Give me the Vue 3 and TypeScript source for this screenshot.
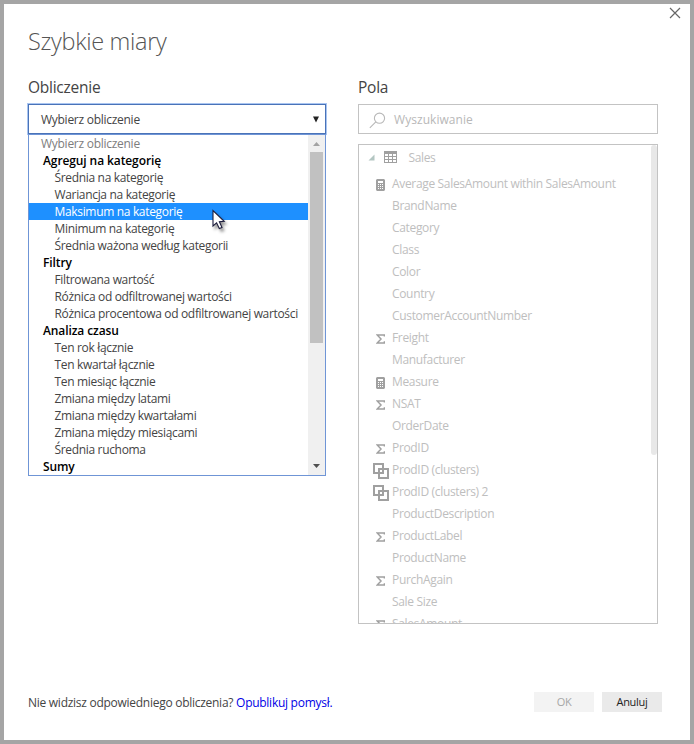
<script setup lang="ts">
import { ref } from 'vue'

type OptionKind = 'placeholder' | 'group' | 'item'
interface CalcOption { label: string; kind: OptionKind }
interface Field { name: string; icon?: 'sum' | 'calc' | 'cluster' }

const item = (label: string): CalcOption => ({ label, kind: 'item' })
const group = (label: string): CalcOption => ({ label, kind: 'group' })

const options: CalcOption[] = [
  { label: 'Wybierz obliczenie', kind: 'placeholder' },
  group('Agreguj na kategorię'),
  item('Średnia na kategorię'),
  item('Wariancja na kategorię'),
  item('Maksimum na kategorię'),
  item('Minimum na kategorię'),
  item('Średnia ważona według kategorii'),
  group('Filtry'),
  item('Filtrowana wartość'),
  item('Różnica od odfiltrowanej wartości'),
  item('Różnica procentowa od odfiltrowanej wartości'),
  group('Analiza czasu'),
  item('Ten rok łącznie'),
  item('Ten kwartał łącznie'),
  item('Ten miesiąc łącznie'),
  item('Zmiana między latami'),
  item('Zmiana między kwartałami'),
  item('Zmiana między miesiącami'),
  item('Średnia ruchoma'),
  group('Sumy'),
]
const active = ref('Maksimum na kategorię')

const fields: Field[] = [
  { name: 'Average SalesAmount within SalesAmount', icon: 'calc' },
  { name: 'BrandName' },
  { name: 'Category' },
  { name: 'Class' },
  { name: 'Color' },
  { name: 'Country' },
  { name: 'CustomerAccountNumber' },
  { name: 'Freight', icon: 'sum' },
  { name: 'Manufacturer' },
  { name: 'Measure', icon: 'calc' },
  { name: 'NSAT', icon: 'sum' },
  { name: 'OrderDate' },
  { name: 'ProdID', icon: 'sum' },
  { name: 'ProdID (clusters)', icon: 'cluster' },
  { name: 'ProdID (clusters) 2', icon: 'cluster' },
  { name: 'ProductDescription' },
  { name: 'ProductLabel', icon: 'sum' },
  { name: 'ProductName' },
  { name: 'PurchAgain', icon: 'sum' },
  { name: 'Sale Size' },
  { name: 'SalesAmount', icon: 'sum' },
]
</script>

<template>
  <div class="dialog">
    <button class="close" aria-label="Zamknij">
      <svg width="12" height="12" viewBox="0 0 12 12"><path d="M1 1L11 11M11 1L1 11" stroke="#666" stroke-width="1.2" fill="none" /></svg>
    </button>
    <h1>Szybkie miary</h1>
    <div class="columns">
      <section class="calc">
        <h2 class="calc-title">Obliczenie</h2>
        <div class="select">
          <span>Wybierz obliczenie</span>
          <svg width="6" height="7" viewBox="0 0 6 7"><path d="M0 0.5H6L3 6.5Z" fill="#222" /></svg>
        </div>
        <div class="dropdown">
          <ul>
            <li v-for="o in options" :key="o.kind + o.label" :class="[o.kind, { active: o.label === active }]">{{ o.label }}</li>
          </ul>
          <div class="scroll">
            <svg width="17" height="17" viewBox="0 0 17 17"><path d="M5 11L8.5 7L12 11Z" fill="#a3a3a3" /></svg>
            <div class="thumb"></div>
            <svg width="17" height="17" viewBox="0 0 17 17"><path d="M5 6H12L8.5 10Z" fill="#505050" /></svg>
          </div>
        </div>
      </section>
      <section class="fields">
        <h2 class="fields-title">Pola</h2>
        <div class="search">
          <svg width="17" height="17" viewBox="0 0 17 17" fill="none" stroke="#b8b8b8" stroke-width="1.1"><circle cx="10.5" cy="6.2" r="5.1" /><path d="M6.8 9.8L0.8 15.8" /></svg>
          <span>Wyszukiwanie</span>
        </div>
        <div class="tree">
          <div class="table-row">
            <svg class="expander" width="7" height="7" viewBox="0 0 7 7"><path d="M6.5 0.5V6.5H0.5Z" fill="#b3c6c2" /></svg>
            <svg class="grid" width="13" height="12" viewBox="0 0 13 12" shape-rendering="crispEdges"><path fill="#a0a0a0" fill-rule="evenodd" d="M0 0H13V12H0ZM1 3V5H4V3ZM5 3V5H8V3ZM9 3V5H12V3ZM1 6V8H4V6ZM5 6V8H8V6ZM9 6V8H12V6ZM1 9V11H4V9ZM5 9V11H8V9ZM9 9V11H12V9Z" /></svg>
            <span>Sales</span>
          </div>
          <div v-for="f in fields" :key="f.name" class="field">
            <span class="icon">
              <svg v-if="f.icon === 'sum'" class="sum" width="9" height="10" viewBox="0 0 9 10"><path d="M8.4 2.5V0.9H1.2L5 5L1.2 9H8.4V7.3" fill="none" stroke="#a0a0a0" stroke-width="1.5" /></svg>
              <svg v-else-if="f.icon === 'calc'" class="calculator" width="9" height="12" viewBox="0 0 9 12"><path fill="#a0a0a0" fill-rule="evenodd" d="M1 0H8L9 1V11L8 12H1L0 11V1ZM2 2V4H7V2ZM2 5V6H3V5ZM4 5V6H5V5ZM6 5V6H7V5ZM2 7V8H3V7ZM4 7V8H5V7ZM6 7V8H7V7ZM2 9V10H3V9ZM4 9V10H5V9ZM6 9V10H7V9Z" /></svg>
              <svg v-else-if="f.icon === 'cluster'" class="cluster" width="16" height="16" viewBox="0 0 16 16" fill="none" stroke="#a0a0a0" stroke-width="2"><rect x="1" y="1" width="9" height="9" /><rect x="6" y="6" width="9" height="9" /></svg>
            </span>
            <span class="name">{{ f.name }}</span>
          </div>
          <div class="tree-thumb"></div>
        </div>
      </section>
    </div>
    <footer>
      <p><span class="ask">Nie widzisz odpowiedniego obliczenia?</span> <a>Opublikuj pomysł.</a></p>
      <button class="btn ok" disabled>OK</button>
      <button class="btn cancel">Anuluj</button>
    </footer>
    <svg class="cursor" width="22" height="28" viewBox="0 0 22 28"><path d="M2 1.5V17L5.6 13.8L8.3 19.6L11 18.4L8.4 12.7L13.2 12.3Z" fill="#fff" stroke="#1c1c3c" stroke-width="1.1" /></svg>
  </div>
</template>

<style>
body { margin: 0; }
</style>

<style scoped>
* { box-sizing: border-box; }
.dialog {
  position: relative;
  width: 694px;
  height: 744px;
  border: 4px solid #a5a5a5;
  background: #fff;
  padding: 21px 28px 28px 24px;
  display: flex;
  flex-direction: column;
  font-family: "Open Sans", "Noto Sans", sans-serif;
  font-size: 12px;
  color: #444;
  white-space: nowrap;
}
.close {
  position: absolute;
  top: 3px;
  right: 9px;
  width: 12px;
  height: 12px;
  padding: 0;
  border: 0;
  background: none;
  line-height: 0;
}
h1 {
  margin: 0;
  height: 32px;
  line-height: 32px;
  font-size: 23.5px;
  font-weight: 300;
  letter-spacing: -0.32px;
  color: #555;
}
h2 {
  margin: 0;
  height: 22px;
  line-height: 22px;
  font-size: 15.5px;
  font-weight: 400;
  letter-spacing: -0.25px;
}
.columns { display: flex; gap: 32px; margin-top: 19px; }
.calc { width: 298px; }
.fields { width: 300px; }
.select {
  display: flex;
  align-items: center;
  justify-content: space-between;
  height: 30px;
  margin-top: 6px;
  padding: 0 6px 0 12px;
  border: 1px solid #4a73b8;
  box-shadow: 0 0 0 1px #a9c5f1;
  letter-spacing: -0.27px;
}
.dropdown {
  display: flex;
  height: 342px;
  border: 1px solid #6f95d6;
  background: #fff;
}
ul { flex: 1; margin: 0; padding: 0; list-style: none; overflow: hidden; }
li { height: 17px; line-height: 17px; padding-left: 25.5px; letter-spacing: -0.33px; }
.placeholder { padding-left: 12px; color: #7d7d7d; letter-spacing: -0.27px; }
.group { padding-left: 14px; font-weight: 600; color: #000; letter-spacing: -0.1px; }
.active { background: #1e90ff; color: #fff; }
.scroll { display: flex; flex-direction: column; width: 17px; background: #f0f0f0; }
.scroll svg { display: block; flex: none; }
.scroll svg:last-child { margin-top: auto; }
.thumb { width: 13px; height: 191px; margin-left: 2px; background: #c1c1c1; }
.search {
  display: flex;
  align-items: center;
  gap: 8px;
  height: 30px;
  margin-top: 6px;
  padding-left: 10px;
  border: 1px solid #c3c3c3;
  color: #b8b8b8;
  letter-spacing: 0.05px;
}
.search svg { margin-top: 2px; }
.tree {
  position: relative;
  height: 480px;
  margin-top: 10px;
  border: 1px solid #c3c3c3;
  overflow: hidden;
  color: #bebebe;
}
.table-row { display: flex; height: 28px; line-height: 26px; padding-left: 9px; letter-spacing: -0.35px; }
.expander { margin: 9px 9px 0 0; }
.grid { margin: 6px 11.5px 0 0; }
.field { display: flex; height: 22px; line-height: 22px; letter-spacing: -0.33px; }
.icon { display: flex; width: 33px; padding-left: 17px; flex: none; }
.icon svg { flex: none; }
.sum { margin-top: 7px; }
.calculator { margin-top: 6px; }
.cluster { margin: 4px 0 0 -3px; }
.tree-thumb {
  position: absolute;
  top: 0;
  right: 0;
  width: 6px;
  height: 310px;
  border-radius: 3px;
  background: #e8e8e8;
}
footer { display: flex; align-items: center; margin-top: auto; height: 20px; }
p { flex: 1; margin: 0; padding-top: 1px; line-height: 21px; letter-spacing: -0.27px; }
a { color: #0000e6; }
.btn {
  width: 60px;
  height: 20px;
  padding: 0;
  border: 0;
  font: inherit;
  font-size: 11px;
  line-height: 20px;
  letter-spacing: -0.3px;
}
.ok { margin-right: 8px; background: #f3f3f3; color: #a6a6a6; }
.cancel { background: #eaeaea; color: #222; }
.cursor { position: absolute; left: 207px; top: 205px; filter: drop-shadow(2px 3px 1.5px rgba(0, 0, 0, 0.4)); }
</style>
